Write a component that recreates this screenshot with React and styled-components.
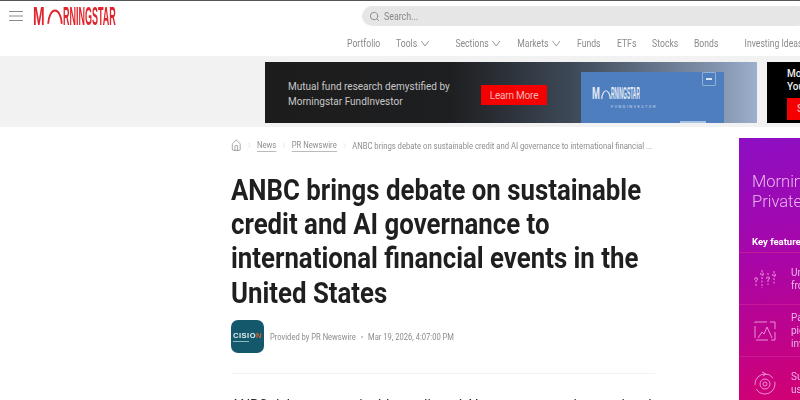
import React from 'react';
import styled, { createGlobalStyle } from 'styled-components';
import { LuSearch, LuChevronRight, LuHouse } from 'react-icons/lu';

const GlobalStyle = createGlobalStyle`
  html, body {
    margin: 0;
    padding: 0;
    background: #fff;
    overflow: hidden;
  }
  body {
    font-family: Roboto, "Liberation Sans", sans-serif;
  }
`;

const Page = styled.div`
  width: 800px;
  height: 400px;
  overflow: hidden;
  filter: blur(0.45px);
  border-top: 1px solid #555;
  box-sizing: border-box;
`;

const Header = styled.header`
  height: 55px;
  display: flex;
  flex-direction: column;
  padding-left: 9px;
  box-sizing: border-box;
`;

const TopRow = styled.div`
  height: 26px;
  display: flex;
  align-items: center;
  white-space: nowrap;
  margin-top: 2px;
`;

const MenuIcon = styled.svg`
  width: 14px;
  height: 10px;
  flex: none;
  fill: none;
  stroke: #8a8a8a;
  stroke-width: 1;
  margin-right: 10px;
`;

const Logo = styled.div`
  width: 329px;
  height: 20px;
  flex: none;
  display: flex;
  align-items: center;
  color: #e2242c;
`;

const LogoWord = styled.span`
  font-family: "Liberation Sans", sans-serif;
  font-size: 25px;
  line-height: 20px;
  font-weight: 700;
  display: inline-block;
  transform: scaleX(${(props) => props.$scale});
  transform-origin: left center;
  width: ${(props) => props.$width}px;
  flex: none;
`;

const SearchBar = styled.div`
  width: 445px;
  height: 20px;
  flex: none;
  border-radius: 10px;
  background: #e6e6e6;
  display: flex;
  align-items: center;
  gap: 4px;
  padding-left: 7px;
  color: #888;
  box-sizing: border-box;
`;

const SearchText = styled.span`
  font-size: 10.5px;
  transform: scaleX(0.84);
  transform-origin: left center;
`;

const Nav = styled.nav`
  display: flex;
  align-items: center;
  margin: 3px 0 0 338px;
  height: 22px;
  color: #8a8a8a;
  font-size: 11.5px;
  white-space: nowrap;
  transform: scaleX(0.75);
  transform-origin: left center;
`;

const NavItem = styled.span`
  display: flex;
  align-items: center;
  gap: 4px;
  margin-right: ${(props) => props.$gap}px;
`;

const NavDivider = styled.span`
  width: 1px;
  height: 9px;
  background: #ddd;
  margin-right: 18px;
`;

const Chevron = styled.svg`
  width: 12px;
  height: 7px;
  flex: none;
  fill: none;
  stroke: #8a8a8a;
  stroke-width: 1;
`;

const AdBand = styled.div`
  height: 71px;
  background: #f2f2f2;
  display: flex;
  padding: 6px 0 0 265px;
  gap: 10px;
  box-sizing: border-box;
`;

const AdBanner = styled.div`
  width: 492px;
  height: 61px;
  flex: none;
  background: linear-gradient(90deg, #1c1c1c 0%, #1e1f21 38%, #3d4857 62%, #8294ae 92%, #9db0cc 100%);
  display: flex;
  align-items: flex-start;
  box-sizing: border-box;
  padding-left: 23px;
`;

const AdCopy = styled.div`
  width: 193px;
  margin-top: 17px;
  color: #c8c8c8;
  white-space: nowrap;
  font-size: 11.5px;
  line-height: 15px;
`;

const AdCopyLine = styled.span`
  display: block;
  transform: scaleX(0.87);
  transform-origin: left center;
`;

const LearnMore = styled.span`
  width: 66px;
  height: 20px;
  margin-top: 23px;
  background: #f50000;
  color: #f5b5b5;
  font-size: 10px;
  display: flex;
  align-items: center;
  justify-content: center;
  letter-spacing: -0.2px;
`;

const AdCard = styled.div`
  width: 143px;
  height: 51px;
  margin: 10px 0 0 34px;
  background: #4f7ebf;
  display: flex;
  flex-direction: column;
  position: relative;
  padding: 15px 0 0 11px;
  box-sizing: border-box;
  color: #e4ecf6;
`;

const AdCardLogo = styled(Logo)`
  width: auto;
  height: 14px;
  color: #e4ecf6;
`;

const SmallWord = styled(LogoWord)`
  font-size: 17px;
  line-height: 14px;
`;

const AdCardSub = styled.span`
  font-size: 4px;
  letter-spacing: 1.4px;
  margin: 3px 0 0 19px;
  color: #c8d8ee;
`;

const AdCardBadge = styled.span`
  position: absolute;
  top: 0;
  right: 8px;
  width: 12px;
  height: 12px;
  border: 1px solid #8fb0da;
  border-radius: 1px;
  display: flex;
  align-items: center;
  justify-content: center;

  &::after {
    content: '';
    width: 6px;
    height: 2px;
    background: #d8e4f4;
  }
`;

const AdCardFoot = styled.span`
  position: absolute;
  bottom: 0;
  right: 18px;
  width: 26px;
  height: 2px;
  background: #a9c2e2;
`;

const SideAd = styled.div`
  width: 60px;
  height: 61px;
  flex: none;
  background: #000;
  padding: 5px 0 0 20px;
  box-sizing: border-box;
  color: #eee;
  font-size: 10px;
  line-height: 13px;
  font-weight: 500;
  white-space: nowrap;
`;

const SideAdButton = styled.span`
  display: block;
  width: 40px;
  height: 22px;
  margin-top: 5px;
  padding-left: 10px;
  line-height: 22px;
  background: #f50000;
  color: #f5b5b5;
`;

const Content = styled.main`
  display: flex;
  padding-left: 231px;
  height: 273px;
  overflow: hidden;
`;

const Article = styled.article`
  width: 424px;
  flex: none;
`;

const Breadcrumbs = styled.div`
  display: flex;
  align-items: center;
  height: 16px;
  margin-top: 10px;
  color: #8e8e8e;
  font-size: 9.5px;
  white-space: nowrap;
  gap: 5px;
  transform: scaleX(0.81);
  transform-origin: left center;

  svg {
    flex: none;
  }
`;

const CrumbLink = styled.span`
  border-bottom: 1px solid #bbb;
  line-height: 12px;
`;

const Title = styled.h1`
  margin: 20px 0 0;
  width: 495px;
  font-size: 30px;
  line-height: 34.2px;
  font-weight: 700;
  color: #1f1f1f;
  transform: scaleX(0.86);
  transform-origin: left center;
`;

const Byline = styled.div`
  display: flex;
  align-items: center;
  margin-top: 10px;
  white-space: nowrap;
`;

const BylineText = styled.div`
  display: flex;
  gap: 4px;
  margin-left: 6px;
  color: #8c8c8c;
  font-size: 9.5px;
  transform: scaleX(0.8);
  transform-origin: left center;
`;

const SourceLogo = styled.div`
  width: 33px;
  height: 33px;
  flex: none;
  border-radius: 7px;
  background: #14596b;
  color: #e8eef0;
  font-family: "Liberation Sans", sans-serif;
  font-size: 7.5px;
  line-height: 9px;
  font-weight: 700;
  letter-spacing: 0.5px;
  display: flex;
  flex-direction: column;
  align-items: center;
  justify-content: center;

  b {
    color: #d0642c;
  }
`;

const SourceLogoLine = styled.span`
  width: 16px;
  height: 1px;
  margin: 1px 13px 0 0;
  background: #8fb4bf;
`;

const Dot = styled.span`
  color: #aaa;
  margin: 0 2px;
`;

const Rule = styled.hr`
  border: none;
  border-top: 1px solid #f2f2f2;
  margin: 20px 0 0;
`;

const Body = styled.p`
  margin: 21px 0 0;
  font-size: 14px;
  line-height: 20px;
  color: #2a2a2a;
  white-space: nowrap;
  overflow: hidden;
`;

const Sidebar = styled.aside`
  width: 62px;
  flex: none;
  margin: 11px 0 0 84px;
  height: 270px;
  background: linear-gradient(170deg, #8d0fc4 0%, #a806a8 45%, #d4006f 100%);
  color: #e8b8ec;
  padding: 34px 0 0 13px;
  box-sizing: border-box;
  overflow: hidden;
  white-space: nowrap;
`;

const SidebarTitle = styled.div`
  font-size: 16.5px;
  line-height: 20px;
  font-weight: 300;
`;

const KeyFeatures = styled.div`
  margin-top: 24px;
  font-size: 9.5px;
  font-weight: 700;
  color: #fff;
  padding-bottom: 5px;
`;

const Feature = styled.div`
  display: flex;
  align-items: center;
  height: 51px;
  gap: 14px;
  margin-left: -13px;
  padding-left: 14px;
  border-top: 1px solid #c81a98;
  font-size: 10px;
  line-height: 13px;
`;

const FeatureIcon = styled.svg`
  width: 24px;
  height: 24px;
  flex: none;
  fill: none;
  stroke: #e890d8;
  stroke-width: 1;
`;

const LogoArc = ({ size, width }) => (
  <svg width={width} height={size} viewBox="0 0 20 18" fill="none" stroke="currentColor" strokeWidth="2.4" style={{ flex: 'none' }}>
    <path d="M1.5 18C2 8 6 1.5 10 1.5S18 8 18.5 18" />
  </svg>
);

const NavChevron = () => (
  <Chevron viewBox="0 0 12 7"><path d="M1 1l5 5 5-5" /></Chevron>
);

export default function App() {
  return (
    <>
      <GlobalStyle />
      <Page>
        <Header>
          <TopRow>
            <MenuIcon viewBox="0 0 14 10"><path d="M0 .5h14M0 5h14M0 9.5h14" /></MenuIcon>
            <Logo>
              <LogoWord $width={14} $scale={0.56}>M</LogoWord>
              <LogoArc size={17} width={16} />
              <LogoWord $width={54} $scale={0.36}>RNINGSTAR</LogoWord>
            </Logo>
            <SearchBar>
              <LuSearch size={11} strokeWidth={2} />
              <SearchText>Search...</SearchText>
            </SearchBar>
          </TopRow>
          <Nav>
            <NavItem $gap={21}>Portfolio</NavItem>
            <NavItem $gap={17}>Tools <NavChevron /></NavItem>
            <NavDivider />
            <NavItem $gap={22}>Sections <NavChevron /></NavItem>
            <NavItem $gap={22}>Markets <NavChevron /></NavItem>
            <NavItem $gap={22}>Funds</NavItem>
            <NavItem $gap={21}>ETFs</NavItem>
            <NavItem $gap={21}>Stocks</NavItem>
            <NavItem $gap={17}>Bonds</NavItem>
            <NavDivider />
            <NavItem $gap={0}>Investing Ideas</NavItem>
          </Nav>
        </Header>

        <AdBand>
          <AdBanner>
            <AdCopy>
              <AdCopyLine>Mutual fund research demystified by</AdCopyLine>
              <AdCopyLine>Morningstar FundInvestor</AdCopyLine>
            </AdCopy>
            <LearnMore>Learn More</LearnMore>
            <AdCard>
              <AdCardBadge />
              <AdCardLogo>
                <SmallWord $width={9} $scale={0.56}>M</SmallWord>
                <LogoArc size={11} width={10} />
                <SmallWord $width={36} $scale={0.29}>RNINGSTAR</SmallWord>
              </AdCardLogo>
              <AdCardSub>FUNDINVESTOR</AdCardSub>
              <AdCardFoot />
            </AdCard>
          </AdBanner>
          <SideAd>
            Mo<br />You
            <SideAdButton>See</SideAdButton>
          </SideAd>
        </AdBand>

        <Content>
          <Article>
            <Breadcrumbs>
              <LuHouse size={13} strokeWidth={1.3} color="#777" />
              <LuChevronRight size={9} strokeWidth={1} color="#bbb" />
              <CrumbLink>News</CrumbLink>
              <LuChevronRight size={9} strokeWidth={1} color="#bbb" />
              <CrumbLink>PR Newswire</CrumbLink>
              <LuChevronRight size={9} strokeWidth={1} color="#bbb" />
              <span>ANBC brings debate on sustainable credit and AI governance to international financial ...</span>
            </Breadcrumbs>
            <Title>ANBC brings debate on sustainable credit and AI governance to international financial events in the United States</Title>
            <Byline>
              <SourceLogo>
                <span>CISIO<b>N</b></span>
                <SourceLogoLine />
              </SourceLogo>
              <BylineText>
                <span>Provided by PR Newswire</span>
                <Dot>•</Dot>
                <span>Mar 19, 2026, 4:07:00 PM</span>
              </BylineText>
            </Byline>
            <Rule />
            <Body>ANBC debates sustainable credit and AI governance at international financial</Body>
          </Article>

          <Sidebar>
            <SidebarTitle>Morningstar<br />Private Markets</SidebarTitle>
            <KeyFeatures>Key features</KeyFeatures>
            <Feature>
              <FeatureIcon viewBox="0 0 24 24" strokeDasharray="2 1.5">
                <path d="M3 10v10M9 3v18M15 6v12M21 4v14" />
                <circle cx="3" cy="12" r="1.5" />
                <circle cx="9" cy="7" r="1.5" />
                <circle cx="15" cy="11" r="1.5" />
                <circle cx="21" cy="8" r="1.5" />
              </FeatureIcon>
              <span>Unique<br />from</span>
            </Feature>
            <Feature>
              <FeatureIcon viewBox="0 0 24 24">
                <path d="M2 3h20v18H2z" strokeDasharray="12 3" />
                <path d="M5 19l4-6 2 2 3-7 5 11" />
              </FeatureIcon>
              <span>Past<br />pictures<br />invest</span>
            </Feature>
            <Feature>
              <FeatureIcon viewBox="0 0 24 24">
                <circle cx="12" cy="13" r="10" strokeDasharray="26 4" />
                <circle cx="12" cy="13" r="5" />
                <circle cx="12" cy="13" r="2" />
                <path d="M9 1l4 2-3 2" />
              </FeatureIcon>
              <span>Sustain<br />use</span>
            </Feature>
          </Sidebar>
        </Content>
      </Page>
    </>
  );
}
